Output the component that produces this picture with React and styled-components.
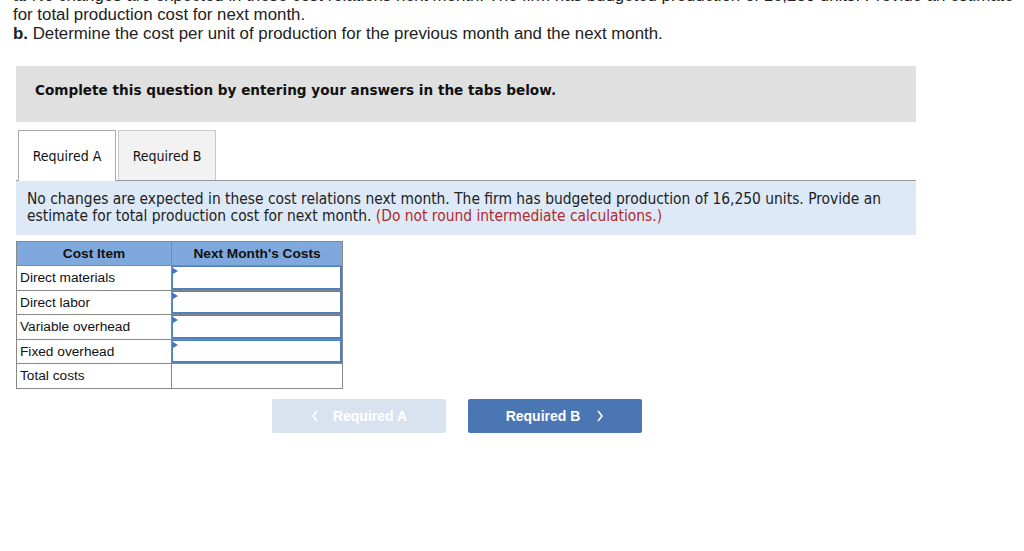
import React from "react";
import styled, { createGlobalStyle } from "styled-components";

const Global = createGlobalStyle`
  html, body { margin: 0; padding: 0; background: #fff; }
  body { overflow: hidden; }
`;

const Page = styled.div`
  width: 1024px;
  height: 551px;
  overflow: hidden;
`;

const Intro = styled.div`
  font-family: "Liberation Sans", Arial, sans-serif;
  font-size: 16.85px;
  line-height: 19px;
  color: #222;
  padding: 0 0 0 13px;
  margin-top: -14px;
  white-space: nowrap;
`;

const Bold = styled.b`
  font-weight: 700;
`;

const Content = styled.div`
  width: 900px;
  margin: 23px 0 0 16px;
`;

const Banner = styled.div`
  background: #e0e0e0;
  height: 56px;
  box-sizing: border-box;
  display: flex;
  align-items: center;
  padding: 0 0 8px 19px;
  font-family: "DejaVu Sans", Verdana, sans-serif;
  font-weight: 700;
  font-size: 13.6px;
  color: #111;
`;

const TabBar = styled.div`
  display: flex;
  align-items: flex-end;
  margin-top: 8px;
  padding-left: 2px;
  border-bottom: 1px solid #9a9a9a;
`;

const Tab = styled.div`
  width: 96px;
  margin-right: 2px;
  margin-bottom: ${(p) => (p.$active ? "-1px" : "0")};
  height: ${(p) => (p.$active ? "50px" : "49px")};
  display: flex;
  align-items: center;
  justify-content: center;
  border: 1px solid ${(p) => (p.$active ? "#aaa" : "#c8c8c8")};
  border-bottom: 0;
  background: ${(p) => (p.$active ? "#fff" : "#f2f2f2")};
  font-family: "DejaVu Sans Condensed", "DejaVu Sans", sans-serif;
  font-size: 14px;
  color: #111;
`;

const Prompt = styled.div`
  background: #dde9f7;
  padding: 10px 10px 10px 11px;
  font-family: "DejaVu Sans Condensed", "DejaVu Sans", sans-serif;
  font-size: 15.4px;
  line-height: 17px;
  color: #222;
`;

const Red = styled.span`
  color: #b22a2a;
`;

const Table = styled.table`
  margin-top: 6px;
  width: 326px;
  table-layout: fixed;
  border-collapse: collapse;
  font-family: "Liberation Sans", Arial, sans-serif;
  font-size: 13.7px;
  color: #111;
`;

const Th = styled.th`
  background: #7fa8dd;
  border: 1px solid #888;
  height: 23px;
  padding: 0;
  font-weight: 700;
  width: ${(p) => p.$w}px;
`;

const Td = styled.td`
  border: 1px solid #888;
  height: 23.5px;
  padding: 0 3px;
  text-align: left;
`;

const InputTd = styled.td`
  border: 1px solid #888;
  height: 23.5px;
  padding: 0;
  position: relative;
`;

const InputBox = styled.div`
  position: absolute;
  inset: 0;
  border: 2px solid #4f7fbe;
  border-top-width: 1px;
  border-left-width: 1px;
  background: #fff;
  &::before {
    content: "";
    position: absolute;
    left: 0;
    top: 1px;
    border-left: 5px solid #3f75c4;
    border-top: 3px solid transparent;
    border-bottom: 3px solid transparent;
  }
`;

const Nav = styled.div`
  display: flex;
  gap: 22px;
  margin: 10px 0 0 256px;
`;

const NavBtn = styled.div`
  width: 174px;
  height: 34px;
  border-radius: 2px;
  display: flex;
  align-items: center;
  justify-content: center;
  gap: ${(p) => (p.$disabled ? "14px" : "16px")};
  font-family: "Liberation Sans", Arial, sans-serif;
  font-weight: 700;
  font-size: 14px;
  color: #fff;
  background: ${(p) => (p.$disabled ? "#d9e3f0" : "#4a76b3")};
`;

const Chevron = ({ dir }) => (
  <svg width="8" height="12" viewBox="0 0 8 12">
    <path
      d={dir === "left" ? "M6 1 L2 6 L6 11" : "M2 1 L6 6 L2 11"}
      fill="none"
      stroke="#fff"
      strokeWidth="1.6"
    />
  </svg>
);

const rows = ["Direct materials", "Direct labor", "Variable overhead", "Fixed overhead"];

export default function App() {
  return (
    <Page>
      <Global />
      <Intro>
        <div>
          <Bold>a.</Bold> No changes are expected in these cost relations next month. The firm has budgeted production of 16,250 units. Provide an estimate
        </div>
        <div>for total production cost for next month.</div>
        <div>
          <Bold>b.</Bold> Determine the cost per unit of production for the previous month and the next month.
        </div>
      </Intro>
      <Content>
        <Banner>Complete this question by entering your answers in the tabs below.</Banner>
        <TabBar>
          <Tab $active>Required A</Tab>
          <Tab>Required B</Tab>
        </TabBar>
        <Prompt>
          No changes are expected in these cost relations next month. The firm has budgeted production of 16,250 units. Provide an estimate for total production cost for next month. <Red>(Do not round intermediate calculations.)</Red>
        </Prompt>
        <Table>
          <thead>
            <tr>
              <Th $w={154}>Cost Item</Th>
              <Th $w={170}>Next Month's Costs</Th>
            </tr>
          </thead>
          <tbody>
            {rows.map((r) => (
              <tr key={r}>
                <Td>{r}</Td>
                <InputTd>
                  <InputBox />
                </InputTd>
              </tr>
            ))}
            <tr>
              <Td>Total costs</Td>
              <Td />
            </tr>
          </tbody>
        </Table>
        <Nav>
          <NavBtn $disabled>
            <Chevron dir="left" />
            Required A
          </NavBtn>
          <NavBtn>
            Required B
            <Chevron dir="right" />
          </NavBtn>
        </Nav>
      </Content>
    </Page>
  );
}
